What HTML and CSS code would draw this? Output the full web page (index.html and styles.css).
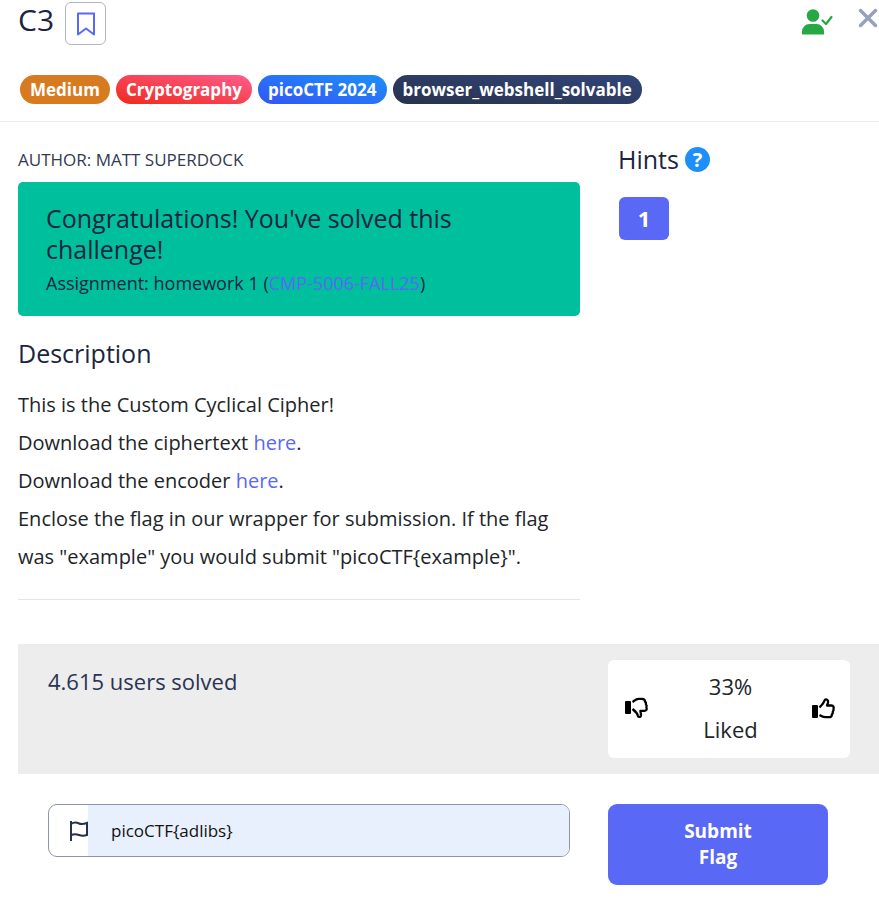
FILE: index.html
```html
<!DOCTYPE html>
<html lang="en">
<head>
<meta charset="utf-8">
<meta name="viewport" content="width=device-width, initial-scale=1">
<title>C3</title>
<link rel="stylesheet" href="styles.css">
</head>
<body>
<header class="header">
  <div class="title-row">
    <h1 class="title">C3</h1>
    <button class="bookmark" type="button" aria-label="Bookmark">
      <svg width="18" height="24" viewBox="0 0 18 24" fill="none" stroke="#5a68f6" stroke-width="2" stroke-linejoin="round"><path d="M1 1.500h16v21l-8-6-8 6z"/></svg>
    </button>
    <svg class="solved-icon" width="32" height="26" viewBox="0 0 32 26" fill="#28a745"><circle cx="11" cy="6.500" r="6.300"/><path d="M0 25.500v-3a7.500 7.500 0 0 1 7.500-7.500h7a7.500 7.500 0 0 1 7.500 7.500v3z"/><path d="M20.500 11.500l3.500 3.500 5.500-7" fill="none" stroke="#28a745" stroke-width="2.200" stroke-linecap="round" stroke-linejoin="round"/></svg>
    <button class="close" type="button" aria-label="Close">
      <svg width="20" height="20" viewBox="0 0 20 20" fill="none" stroke="#98a1bc" stroke-width="3.500" stroke-linecap="round"><path d="M2.500 2.500l15 15M17.500 2.500l-15 15"/></svg>
    </button>
  </div>
  <div class="tags">
    <span class="tag tag-medium">Medium</span>
    <span class="tag tag-crypto">Cryptography</span>
    <span class="tag tag-event">picoCTF 2024</span>
    <span class="tag tag-solvable">browser_webshell_solvable</span>
  </div>
</header>
<main class="content">
  <div class="columns">
    <section class="details">
      <p class="author">AUTHOR: MATT SUPERDOCK</p>
      <div class="alert">
        <h2 class="heading">Congratulations! You've solved this challenge!</h2>
        <p class="assignment">Assignment: homework 1 (<a href="#">CMP-5006-FALL25</a>)</p>
      </div>
      <h2 class="heading">Description</h2>
      <p class="description">This is the Custom Cyclical Cipher!<br>Download the ciphertext <a href="#">here</a>.<br>Download the encoder <a href="#">here</a>.<br>Enclose the flag in our wrapper for submission. If the flag was "example" you would submit "picoCTF{example}".</p>
      <hr class="rule">
    </section>
    <aside class="hints">
      <div class="hints-title">
        <h2 class="heading">Hints</h2>
        <button class="help" type="button" aria-label="About hints">?</button>
      </div>
      <button class="hint" type="button">1</button>
    </aside>
  </div>
  <section class="stats">
    <p class="solves">4.615 users solved</p>
    <div class="rating">
      <button class="vote vote-down" type="button" aria-label="Dislike">
        <svg width="24" height="22" viewBox="0 0 24 22"><rect x="0" y="4" width="6" height="13" rx="1"/><path d="M7.500 5C9.500 4 10.500 1.800 13.500 1.800h3.500c2 0 3 .8 3 2.700 1 .8 1.200 1.800.9 2.800.9 1 .9 2 .5 3 .9 2.300-.2 3.500-2 3.500h-4c0 2 1 3 .5 5-.5 1.500-2.500 1.500-3 0-.7-3-2.700-4.500-5.400-6.800" fill="none" stroke="#000" stroke-width="2.300" stroke-linejoin="round"/></svg>
      </button>
      <p class="liked">33%<br>Liked</p>
      <button class="vote vote-up" type="button" aria-label="Like">
        <svg width="24" height="22" viewBox="0 0 24 22"><rect x="0" y="8" width="6" height="13" rx="1"/><path d="M7.500 10.500c3-3 4.300-4.500 5-7 .5-1.500 3-1.500 3.500.5.500 2-.5 3-1 4.500h4.500c2 0 2.500 1.500 2 3.500.5 1-.2 2-.7 2.700.2 1.300-.3 2.300-1 2.800.2 2-1 2.700-3 2.700h-3c-2.500 0-4-1-6.300-2.200" fill="none" stroke="#000" stroke-width="2.300" stroke-linejoin="round"/></svg>
      </button>
    </div>
  </section>
  <form class="submit-form">
    <div class="flag-field">
      <label class="flag-label" for="flag" aria-label="Flag">
        <svg width="18" height="20" viewBox="0 0 18 20" fill="none" stroke="#27304a" stroke-width="2"><path d="M1 0v20M1 3c3-2 6-1.500 8-.5s5 .5 8-.5v12c-3 1-5.500 1-8 0s-5-1-8 0"/></svg>
      </label>
      <input class="flag-input" id="flag" type="text" value="picoCTF{adlibs}">
    </div>
    <button class="submit" type="submit">Submit<br>Flag</button>
  </form>
</main>
</body>
</html>
```
FILE: styles.css
```css
* {
  box-sizing: border-box;
}

body {
  margin: 0;
  background: #fff;
  color: #212529;
  font-family: "Open Sans", "Noto Sans", sans-serif;
  font-size: 17px;
}

h1, h2, p {
  margin: 0;
  font-weight: 400;
}

button, input {
  margin: 0;
  padding: 0;
  border: 0;
  font-family: inherit;
}

button {
  cursor: pointer;
}

svg {
  display: block;
}

a {
  color: #5a68f6;
  text-decoration: none;
}

.header {
  padding: 2px 0 17px 18px;
  border-bottom: 1px solid #ebebeb;
}

.title-row {
  display: flex;
  align-items: flex-start;
}

.title {
  color: #1b2540;
  font-size: 30px;
  line-height: 36px;
}

.bookmark {
  display: flex;
  align-items: center;
  justify-content: center;
  width: 41px;
  height: 43px;
  margin-left: 11px;
  border: 1px solid #b1b5c3;
  border-radius: 6px;
  background: #fff;
}

.solved-icon {
  margin: 7px 24px 0 auto;
}

.close {
  margin: 6px 1px 0 0;
  background: none;
}

.tags {
  display: flex;
  flex-wrap: wrap;
  gap: 6px;
  margin-top: 30px;
  padding-left: 2px;
}

.tag {
  padding: 0 10px;
  border-radius: 15px;
  color: #fff;
  font-weight: 700;
  line-height: 29px;
}

.tag-medium {
  background: #d87a20;
}

.tag-crypto {
  background: linear-gradient(to top right, #f02a1c, #ff5c8d);
}

.tag-event {
  background: linear-gradient(to top right, #3355f5, #1c90fb);
}

.tag-solvable {
  background: linear-gradient(to top right, #28324c, #32467a);
}

.content {
  padding-left: 18px;
}

.columns {
  display: grid;
  grid-template-columns: 562fr 261fr;
  gap: 38px;
  padding-top: 22px;
}

.author {
  color: #323a52;
  line-height: 32px;
}

.heading {
  color: #1b2540;
  font-size: 25px;
  line-height: 31px;
}

.alert {
  margin: 6px 0 22px;
  padding: 21px 28px 20px;
  border-radius: 5px;
  background: #00bf9c;
}

.assignment {
  margin-top: 5px;
  color: #1b2540;
  font-size: 18px;
  line-height: 26px;
}

.description {
  margin-top: 17px;
  font-size: 20px;
  line-height: 38px;
}

.rule {
  margin: 23px 0 0;
  border: 0;
  border-top: 1px solid #e5e5e5;
}

.hints-title {
  display: flex;
  align-items: center;
  gap: 6px;
}

.help {
  width: 25px;
  height: 25px;
  border-radius: 50%;
  background: #1e8ffa;
  color: #fff;
  font-size: 20px;
  font-weight: 700;
  line-height: 25px;
}

.hint {
  width: 50px;
  height: 43px;
  margin: 22px 0 0 1px;
  padding-bottom: 2px;
  border-radius: 6px;
  background: #5a68f6;
  color: #fff;
  font-size: 22px;
  font-weight: 700;
}

.stats {
  display: flex;
  justify-content: space-between;
  margin-top: 44px;
  padding: 16px 29px 16px 30px;
  background: #ededed;
}

.solves {
  color: #2b3352;
  font-size: 22px;
  line-height: 43px;
}

.rating {
  display: flex;
  align-items: center;
  justify-content: space-between;
  width: 242px;
  padding: 5px 14px 7px 17px;
  border-radius: 6px;
  background: #fff;
}

.vote {
  background: none;
}

.liked {
  font-size: 22px;
  line-height: 43px;
  text-align: center;
}

.submit-form {
  display: flex;
  align-items: flex-start;
  gap: 38px;
  padding: 30px 51px 30px 30px;
}

.flag-field {
  display: flex;
  flex: 1;
  min-width: 0;
  height: 53px;
  overflow: hidden;
  border: 1px solid #8e94a8;
  border-radius: 9px;
}

.flag-label {
  display: flex;
  align-items: center;
  justify-content: flex-end;
  width: 39px;
}

.flag-input {
  flex: 1;
  min-width: 0;
  padding-left: 23px;
  background: #e8effd;
  color: #111;
  font-size: 17px;
}

.submit {
  width: 220px;
  height: 81px;
  padding-bottom: 2px;
  border-radius: 9px;
  background: #5a68f6;
  color: #fff;
  font-size: 19px;
  font-weight: 700;
  line-height: 26px;
}
```
